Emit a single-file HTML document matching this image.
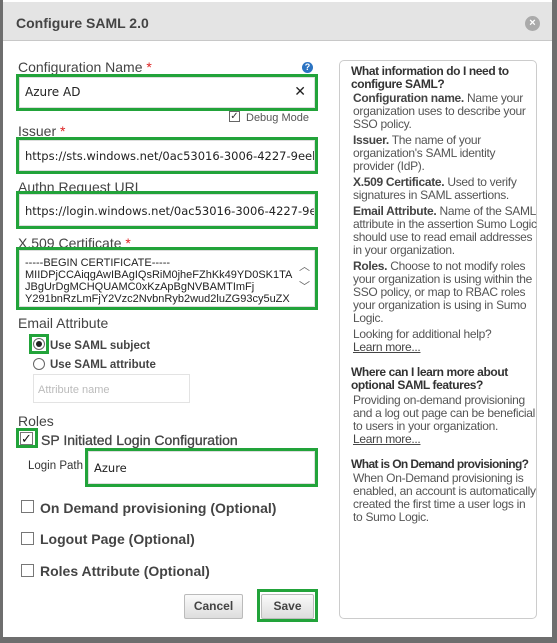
<!DOCTYPE html>
<html><head><style>
*{box-sizing:border-box;margin:0;padding:0}
body{width:557px;height:643px;background:#6e6e6e;position:relative;overflow:hidden;font-family:"Liberation Sans",Arial,sans-serif;color:#333}
.dlg{position:absolute;left:3px;top:0;width:549px;height:637px;background:#fff}
.title{position:absolute;left:0;top:2px;width:549px;height:39px;background:#e4e4e4;border-bottom:1px solid #c8c8c8}
.title span{position:absolute;left:13px;top:13px;font-size:14px;font-weight:bold;color:#444}
.close{position:absolute;left:522px;top:14px;width:15px;height:15px;border-radius:50%;background:#aaa;color:#fff;font-size:11px;line-height:15px;text-align:center;font-weight:bold}
.a{position:absolute}
.lbl{font-size:14px;color:#444}
.star{color:#d22}
.g{position:absolute;border:3px solid #22a33a}
.inp{position:absolute;background:#fff;border:1px solid #ddd;font-family:"DejaVu Sans",sans-serif;font-size:11.5px;color:#222;padding:0 0 0 5px;white-space:nowrap;overflow:hidden}
.cb{position:absolute;width:13px;height:13px;border:1px solid #777;background:#fff}
.opt{font-size:14px;color:#444;font-weight:bold}
.panel{position:absolute;left:336px;top:60px;width:198px;height:559px;border:1px solid #ccc;border-radius:5px;font-size:12px;letter-spacing:-0.3px;line-height:13px;color:#555;padding:4px 6px 0 13px;white-space:nowrap}
.panel b{color:#444}
.panel h4{font-size:12px;color:#333;margin-left:-2px;letter-spacing:-0.4px}
.panel p{margin-top:3px}
.panel u{color:#444}
.btn{position:absolute;height:25px;border:1px solid #bbb;border-radius:2px;background:linear-gradient(#fafafa,#ddd);font-size:12px;font-weight:bold;color:#444;text-align:center;line-height:23px}
</style></head><body>
<div class="dlg">
<div class="title"><span>Configure SAML 2.0</span><div class="close">×</div></div>

<div class="a lbl" style="left:15px;top:59px">Configuration Name <span class="star">*</span></div>
<div class="a" style="left:299px;top:62px;width:11px;height:11px;border-radius:50%;background:#2b73c2;color:#fff;font-size:9px;font-weight:bold;text-align:center;line-height:11px">?</div>
<div class="g" style="left:13px;top:74px;width:302px;height:37px"></div>
<div class="inp" style="left:16px;top:77px;width:296px;height:31px;line-height:29px;font-size:12px">Azure AD<span style="position:absolute;right:8px;font-size:14px">✕</span></div>

<div class="a" style="left:226px;top:111px;width:11px;height:11px;border:1px solid #666;font-size:10px;line-height:9px;text-align:center">✓</div>
<div class="a" style="left:243px;top:112px;font-size:11px;color:#555">Debug Mode</div>

<div class="a lbl" style="left:15px;top:123px">Issuer <span class="star">*</span></div>
<div class="g" style="left:13px;top:137px;width:302px;height:37px"></div>
<div class="inp" style="left:16px;top:140px;width:296px;height:31px;line-height:31px">https://sts.windows.net/0ac53016-3006-4227-9eeb</div>

<div class="a lbl" style="left:15px;top:179px">Authn Request URL</div>
<div class="g" style="left:13px;top:191px;width:302px;height:38px"></div>
<div class="inp" style="left:16px;top:194px;width:296px;height:32px;line-height:32px">https://login.windows.net/0ac53016-3006-4227-9e</div>

<div class="a lbl" style="left:15px;top:235px">X.509 Certificate <span class="star">*</span></div>
<div class="g" style="left:13px;top:247px;width:302px;height:63px"></div>
<div class="inp" style="left:16px;top:250px;width:296px;height:57px;font-family:'Liberation Sans',sans-serif;font-size:11px;line-height:12px;padding-top:6px;white-space:pre">-----BEGIN CERTIFICATE-----
MIIDPjCCAiqgAwIBAgIQsRiM0jheFZhKk49YD0SK1TA
JBgUrDgMCHQUAMC0xKzApBgNVBAMTImFj
Y291bnRzLmFjY2Vzc2NvbnRyb2wud2luZG93cy5uZX
<span style="position:absolute;right:4px;top:6px;font-size:11px;color:#666;line-height:20px">︿<br>﹀</span></div>

<div class="a lbl" style="left:15px;top:315px">Email Attribute</div>
<div class="g" style="left:26px;top:334px;width:20px;height:20px"></div>
<div class="a" style="left:30px;top:338px;width:12px;height:12px;border:1px solid #666;border-radius:50%;background:#fff"><div style="margin:2px;width:6px;height:6px;border-radius:50%;background:#222"></div></div>
<div class="a opt" style="left:47px;top:340px;font-size:11.5px">Use SAML subject</div>
<div class="a" style="left:30px;top:358px;width:12px;height:12px;border:1px solid #666;border-radius:50%;background:#fff"></div>
<div class="a opt" style="left:47px;top:359px;font-size:11.5px">Use SAML attribute</div>
<div class="a" style="left:30px;top:374px;width:157px;height:29px;border:1px solid #e3e3e3;font-size:11px;color:#bbb;padding:9px 0 0 4px">Attribute name</div>

<div class="a lbl" style="left:15px;top:413px">Roles</div>
<div class="g" style="left:13px;top:428px;width:22px;height:20px"></div>
<div class="cb" style="left:17px;top:432px;font-size:13px;line-height:11px;color:#111">✓</div>
<div class="a opt" style="left:38px;top:432px;font-weight:normal;color:#444;font-size:14px;-webkit-text-stroke:0.3px #444">SP Initiated Login Configuration</div>
<div class="a" style="left:25px;top:460px;font-size:11.5px;color:#333">Login Path</div>
<div class="g" style="left:82px;top:448px;width:233px;height:39px"></div>
<div class="inp" style="left:85px;top:451px;width:227px;height:33px;line-height:33px;font-size:11.5px">Azure</div>

<div class="cb" style="left:18px;top:500px"></div>
<div class="a opt" style="left:37px;top:500px;font-size:14px">On Demand provisioning (Optional)</div>
<div class="cb" style="left:18px;top:532px"></div>
<div class="a opt" style="left:37px;top:531px;font-size:14px">Logout Page (Optional)</div>
<div class="cb" style="left:18px;top:564px"></div>
<div class="a opt" style="left:37px;top:563px;font-size:14px">Roles Attribute (Optional)</div>

<div class="btn" style="left:181px;top:594px;width:59px">Cancel</div>
<div class="g" style="left:254px;top:589px;width:61px;height:33px"></div>
<div class="btn" style="left:258px;top:594px;width:53px">Save</div>

<div class="panel">
<h4>What information do I need to<br>configure SAML?</h4>
<p style="margin-top:1px"><b>Configuration name.</b> Name your<br>organization uses to describe your<br>SSO policy.</p>
<p><b>Issuer.</b> The name of your<br>organization's SAML identity<br>provider (IdP).</p>
<p><b>X.509 Certificate.</b> Used to verify<br>signatures in SAML assertions.</p>
<p><b>Email Attribute.</b> Name of the SAML<br>attribute in the assertion Sumo Logic<br>should use to read email addresses<br>in your organization.</p>
<p><b>Roles.</b> Choose to not modify roles<br>your organization is using within the<br>SSO policy, or map to RBAC roles<br>your organization is using in Sumo<br>Logic.</p>
<p>Looking for additional help?<br><u>Learn more...</u></p>
<h4 style="margin-top:12px">Where can I learn more about<br>optional SAML features?</h4>
<p style="margin-top:2px">Providing on-demand provisioning<br>and a log out page can be beneficial<br>to users in your organization.<br><u>Learn more...</u></p>
<h4 style="margin-top:12px;letter-spacing:-0.6px">What is On Demand provisioning?</h4>
<p style="margin-top:1px">When On-Demand provisioning is<br>enabled, an account is automatically<br>created the first time a user logs in<br>to Sumo Logic.</p>
</div>
</div>
</body></html>
